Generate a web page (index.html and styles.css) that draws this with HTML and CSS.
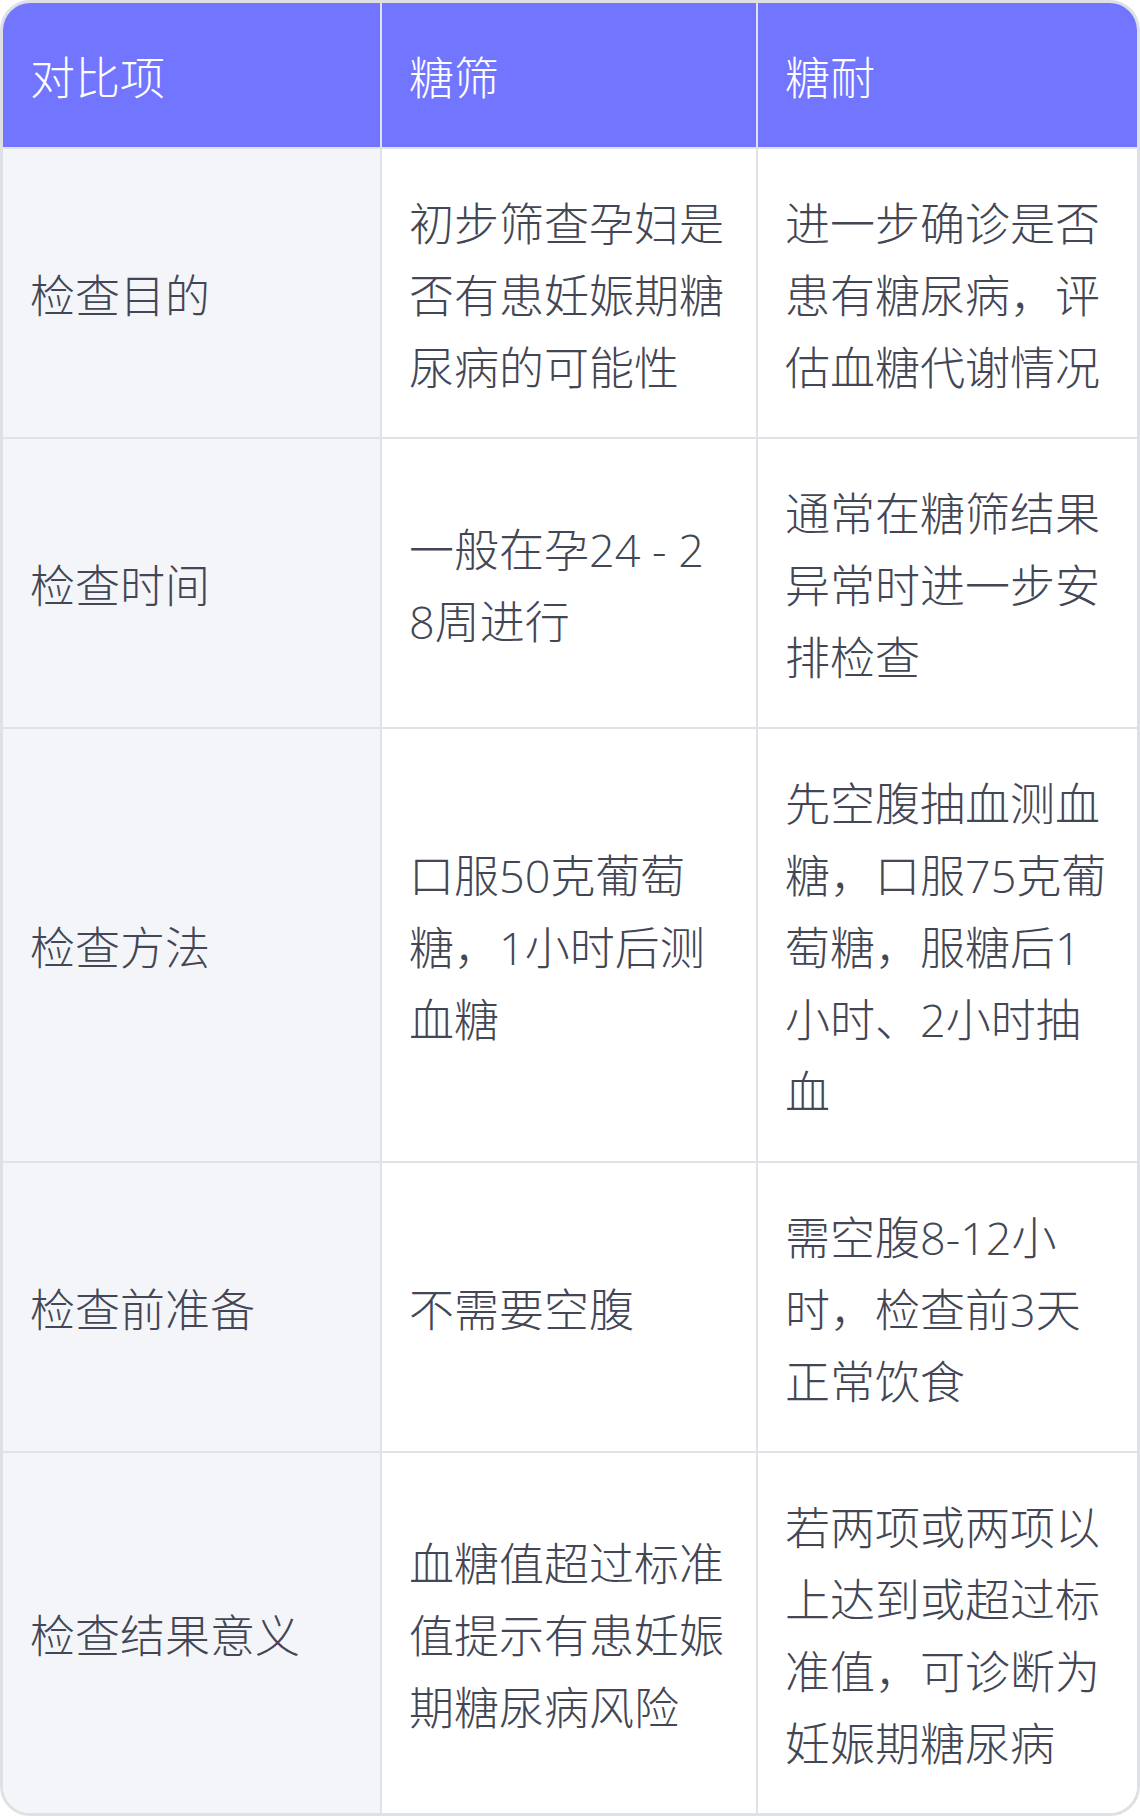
FILE: index.html
```html
<!DOCTYPE html>
<html lang="zh-CN">
<head>
<meta charset="utf-8">
<title>糖筛与糖耐对比</title>
<link rel="stylesheet" href="styles.css">
</head>
<body>
<div class="card">
  <table class="compare">
    <thead>
      <tr>
        <th class="col-item">对比项</th>
        <th class="col-screen">糖筛</th>
        <th class="col-tolerance">糖耐</th>
      </tr>
    </thead>
    <tbody>
      <tr>
        <td class="label">检查目的</td>
        <td>初步筛查孕妇是否有患妊娠期糖尿病的可能性</td>
        <td>进一步确诊是否患有糖尿病，评估血糖代谢情况</td>
      </tr>
      <tr>
        <td class="label">检查时间</td>
        <td>一般在孕24 - 28周进行</td>
        <td>通常在糖筛结果异常时进一步安排检查</td>
      </tr>
      <tr>
        <td class="label">检查方法</td>
        <td>口服50克葡萄糖，1小时后测血糖</td>
        <td>先空腹抽血测血糖，口服75克葡萄糖，服糖后1小时、2小时抽血</td>
      </tr>
      <tr>
        <td class="label">检查前准备</td>
        <td>不需要空腹</td>
        <td>需空腹8-12小时，检查前3天正常饮食</td>
      </tr>
      <tr>
        <td class="label">检查结果意义</td>
        <td>血糖值超过标准值提示有患妊娠期糖尿病风险</td>
        <td>若两项或两项以上达到或超过标准值，可诊断为妊娠期糖尿病</td>
      </tr>
    </tbody>
  </table>
</div>
</body>
</html>
```

FILE: styles.css
```css
html, body {
  margin: 0;
  padding: 0;
  background: #ffffff;
}

body {
  font-family: "Open Sans", "Noto Sans", "Noto Sans CJK SC", sans-serif;
  font-weight: 300;
}

.card {
  width: 1140px;
  height: 1816px;
  box-sizing: border-box;
  border: 3px solid #dfe0e5;
  border-radius: 30px;
  overflow: hidden;
  background: #ffffff;
}

.compare {
  width: 100%;
  border-collapse: separate;
  border-spacing: 0;
  table-layout: fixed;
}

.compare th,
.compare td {
  box-sizing: border-box;
  padding: 39px 28px 33px 27px;
  font-size: 45px;
  line-height: 72px;
  text-align: left;
  vertical-align: middle;
  word-break: break-all;
  border-right: 2px solid #e1e2e7;
  border-bottom: 2px solid #e1e2e7;
}

.compare .col-item {
  width: 379px;
}

.compare .col-screen {
  width: 376px;
}

.compare th:last-child,
.compare td:last-child {
  border-right: none;
}

.compare tbody tr:last-child td {
  border-bottom: none;
}

.compare th {
  background: #7276ff;
  color: #ffffff;
  font-weight: 300;
}

.compare td {
  color: #434654;
  background: #ffffff;
}

.compare td.label {
  background: #f4f5f9;
}
```
